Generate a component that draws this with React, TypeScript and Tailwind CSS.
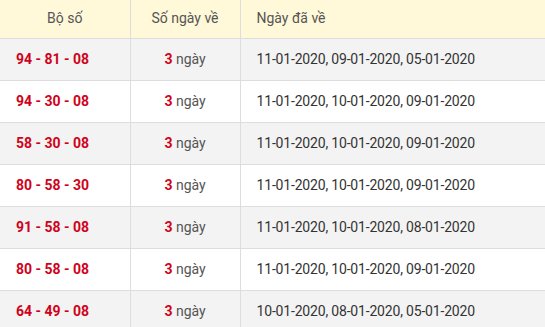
import React from 'react';

const ROWS = [
  { bo: '94 - 81 - 08', days: '11-01-2020, 09-01-2020, 05-01-2020' },
  { bo: '94 - 30 - 08', days: '11-01-2020, 10-01-2020, 09-01-2020' },
  { bo: '58 - 30 - 08', days: '11-01-2020, 10-01-2020, 09-01-2020' },
  { bo: '80 - 58 - 30', days: '11-01-2020, 10-01-2020, 09-01-2020' },
  { bo: '91 - 58 - 08', days: '11-01-2020, 10-01-2020, 08-01-2020' },
  { bo: '80 - 58 - 08', days: '11-01-2020, 10-01-2020, 09-01-2020' },
  { bo: '64 - 49 - 08', days: '10-01-2020, 08-01-2020, 05-01-2020' },
];

export default function App() {
  return (
    <div className="w-[545px] h-[327px] overflow-hidden bg-white" style={{ fontFamily: 'Roboto, "Liberation Sans", sans-serif' }}>
      <table className="border-collapse w-[560px] text-[14px] table-fixed">
        <colgroup>
          <col className="w-[130px]" />
          <col className="w-[110px]" />
          <col />
        </colgroup>
        <thead>
          <tr className="bg-[#fff8d9] h-[38px] text-[#555]">
            <th className="font-normal text-center border-b border-r border-[#ddd]">Bộ số</th>
            <th className="font-normal text-center border-b border-r border-[#ddd]">Số ngày về</th>
            <th className="font-normal text-left pl-4 border-b border-[#ddd]">Ngày đã về</th>
          </tr>
        </thead>
        <tbody>
          {ROWS.map((r, i) => (
            <tr key={i} className={`h-[42px] ${i % 2 === 0 ? 'bg-[#f3f3f3]' : 'bg-white'}`}>
              <td className="pl-4 font-bold text-[#d0021b] border-b border-r border-[#ddd]">{r.bo}</td>
              <td className="text-center text-[#555] border-b border-r border-[#ddd]">
                <span className="font-bold text-[#d0021b]">3</span> ngày
              </td>
              <td className="pl-4 text-[#333] tracking-[-0.18px] border-b border-[#ddd]">{r.days}</td>
            </tr>
          ))}
        </tbody>
      </table>
    </div>
  );
}
